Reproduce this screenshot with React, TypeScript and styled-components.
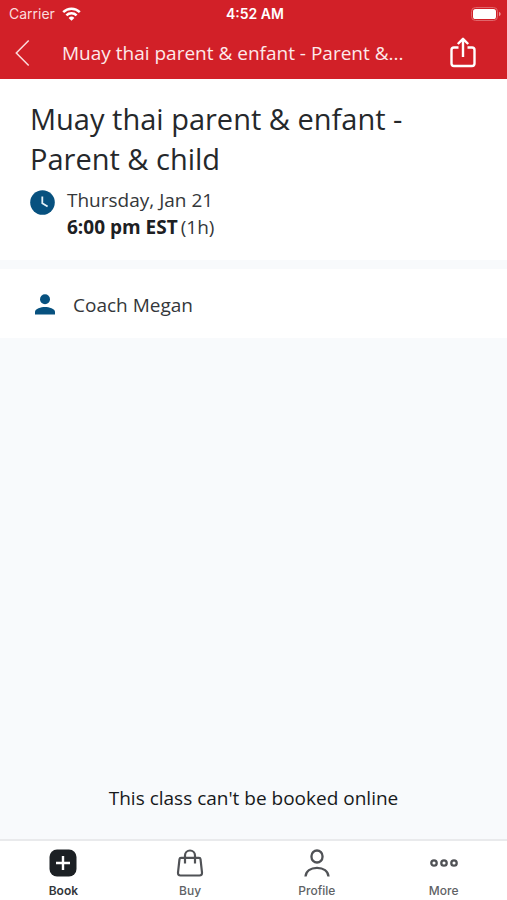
import React from "react";
import styled, { createGlobalStyle } from "styled-components";

const GlobalStyle = createGlobalStyle`
  * { box-sizing: border-box; }
  body { margin: 0; }
  button { border: 0; padding: 0; margin: 0; background: none; font: inherit; color: inherit; cursor: pointer; }
  svg { display: block; flex: none; }
`;

const Screen = styled.div`
  min-height: 100vh;
  display: flex;
  flex-direction: column;
  background: #f8fafc;
  color: #25282b;
  font-family: "Open Sans", "Noto Sans", sans-serif;
`;

const Header = styled.header`
  background: #d22028;
  color: #fff;
`;

const StatusBar = styled.div`
  display: grid;
  grid-template-columns: 1fr auto 1fr;
  align-items: center;
  height: 26px;
  padding: 1px 6px 0 9px;
  font-family: Inter, "Liberation Sans", sans-serif;
  font-size: 14px;
  line-height: 16px;
`;

const Carrier = styled.div`
  display: flex;
  align-items: center;
  gap: 7px;
  color: #fbdcdd;
`;

const Clock = styled.time`
  font-weight: 600;
`;

const BatterySlot = styled.div`
  justify-self: end;
`;

const NavBar = styled.div`
  display: flex;
  align-items: center;
  height: 53px;
  padding: 0 31px 0 14px;
`;

const NavButton = styled.button`
  display: flex;
  align-items: center;
`;

const NavTitle = styled.div`
  flex: 1;
  min-width: 0;
  margin: 0 16px 0 32px;
  overflow: hidden;
  white-space: nowrap;
  text-overflow: ellipsis;
  font-size: 19px;
  line-height: 28px;
  color: #fde9ea;
`;

const Main = styled.main`
  flex: 1;
  display: flex;
  flex-direction: column;
  gap: 9px;
`;

const Summary = styled.section`
  padding: 20px 30px 19px;
  background: #fff;
`;

const Title = styled.h1`
  margin: 0;
  font-size: 29px;
  font-weight: 400;
  line-height: 40px;
`;

const Schedule = styled.div`
  display: flex;
  gap: 12px;
  margin-top: 8px;
  font-size: 19px;
  line-height: 27px;
  color: #34373a;
`;

const ScheduleIcon = styled.div`
  padding-top: 3px;
`;

const Time = styled.div`
  display: flex;
  gap: 3px;
`;

const StartTime = styled.strong`
  font-weight: 700;
  color: #1d2023;
`;

const CoachRow = styled.section`
  display: flex;
  align-items: center;
  gap: 18px;
  height: 69px;
  padding: 2px 30px 0 35px;
  background: #fff;
  font-size: 19px;
  line-height: 28px;
  color: #34373a;
`;

const Notice = styled.p`
  margin: auto 0 27px;
  text-align: center;
  font-size: 19px;
  line-height: 28px;
  color: #17191b;
`;

const TabBar = styled.nav`
  display: grid;
  grid-template-columns: repeat(4, 1fr);
  height: 61px;
  border-top: 2px solid #e9eaec;
  background: #fff;
`;

const Tab = styled.button<{ $active?: boolean }>`
  display: flex;
  flex-direction: column;
  align-items: center;
  gap: 6px;
  padding-top: 8px;
  font-family: Inter, "Liberation Sans", sans-serif;
  font-size: 12px;
  font-weight: ${(p) => (p.$active ? 600 : 500)};
  line-height: 16px;
  color: ${(p) => (p.$active ? "#33363a" : "#606265")};
`;

const WifiIcon = () => (
  <svg width="19" height="14" viewBox="0 0 19 14" fill="none" stroke="#fff" strokeWidth="2.5" aria-hidden="true">
    <path d="M1.2 5.2a11.7 11.7 0 0 1 16.6 0" />
    <path d="M4.4 8.4a7.2 7.2 0 0 1 10.2 0" />
    <path d="M9.5 13.8 6.6 10.9a4.1 4.1 0 0 1 5.800 0Z" fill="#fff" stroke="none" />
  </svg>
);

const BatteryIcon = () => (
  <svg width="30" height="14" viewBox="0 0 30 14" aria-hidden="true">
    <rect x=".5" y=".5" width="26" height="13" rx="4" fill="none" stroke="#e0666b" />
    <rect x="2" y="2" width="23" height="10" rx="2.6" fill="#fff" />
    <path d="M28 4.7q1.7.7 1.7 2.3T28 9.3Z" fill="#ed9599" />
  </svg>
);

const BackIcon = () => (
  <svg width="16" height="28" viewBox="0 0 16 28" fill="none" stroke="#fbdcdd" strokeWidth="1.5" aria-hidden="true">
    <path d="M14.7 1.5 2.3 14l12.4 12.5" />
  </svg>
);

const ShareIcon = () => (
  <svg width="26" height="32" viewBox="0 0 26 32" fill="none" stroke="#fff" strokeWidth="2.4" strokeLinejoin="round" aria-hidden="true">
    <path d="M8.5 10.5H4A2.5 2.5 0 0 0 1.5 13v13.500A2.500 2.500 0 0 0 4 29h18a2.500 2.500 0 0 0 2.500-2.500V13a2.500 2.500 0 0 0-2.500-2.500h-4.500" />
    <path d="M13 20V2.500M7.800 7 13 1.800 18.200 7" />
  </svg>
);

const ClockIcon = () => (
  <svg width="25" height="25" viewBox="0 0 25 25" aria-hidden="true">
    <circle cx="12.5" cy="12.5" r="12.3" fill="#07517f" />
    <path d="M12.3 6.5v6.7l5.3 3.3" fill="none" stroke="#e5f2f8" strokeWidth="1.8" />
  </svg>
);

const CoachIcon = () => (
  <svg width="20" height="21" viewBox="0 0 20 21" fill="#07517f" aria-hidden="true">
    <circle cx="10" cy="5.3" r="5" />
    <path d="M0 20.5V18c0-3.500 6-5 10-5s10 1.500 10 5v2.500Z" />
  </svg>
);

const BookIcon = () => (
  <svg width="28" height="28" viewBox="0 0 28 28" aria-hidden="true">
    <rect x=".5" y=".5" width="27" height="27" rx="7.5" fill="#1c2024" />
    <path d="M14 7v14M7 14h14" stroke="#fff" strokeWidth="2.4" />
  </svg>
);

const BuyIcon = () => (
  <svg width="28" height="28" viewBox="0 0 28 28" fill="none" stroke="#505256" strokeWidth="2.2" strokeLinejoin="round" aria-hidden="true">
    <path d="M5 8.800h18a1.500 1.500 0 0 1 1.500 1.300L26 23.500q.2 3-2.500 3h-19q-2.700 0-2.500-3L3.500 10.100A1.500 1.500 0 0 1 5 8.800Z" />
    <path d="M9 14.500V6.500a5 5 0 0 1 10 0v8" />
  </svg>
);

const ProfileIcon = () => (
  <svg width="28" height="28" viewBox="0 0 28 28" fill="none" stroke="#505256" strokeWidth="2.3" aria-hidden="true">
    <rect x="8.5" y="1.5" width="11" height="12" rx="5.5" />
    <path d="M2.500 27.500c.5-5.500 5-8.700 11.500-8.700s11 3.200 11.500 8.700" />
  </svg>
);

const MoreIcon = () => (
  <svg width="28" height="28" viewBox="0 0 28 28" fill="none" stroke="#505256" strokeWidth="2.3" aria-hidden="true">
    <circle cx="4" cy="14" r="2.7" />
    <circle cx="14" cy="14" r="2.7" />
    <circle cx="24" cy="14" r="2.7" />
  </svg>
);

const tabs = [
  { label: "Book", Icon: BookIcon, active: true },
  { label: "Buy", Icon: BuyIcon },
  { label: "Profile", Icon: ProfileIcon },
  { label: "More", Icon: MoreIcon },
];

export default function App() {
  return (
    <Screen>
      <GlobalStyle />
      <Header>
        <StatusBar>
          <Carrier>
            Carrier
            <WifiIcon />
          </Carrier>
          <Clock>4:52 AM</Clock>
          <BatterySlot>
            <BatteryIcon />
          </BatterySlot>
        </StatusBar>
        <NavBar>
          <NavButton type="button" aria-label="Back">
            <BackIcon />
          </NavButton>
          <NavTitle>Muay thai parent &amp; enfant - Parent &amp;...</NavTitle>
          <NavButton type="button" aria-label="Share">
            <ShareIcon />
          </NavButton>
        </NavBar>
      </Header>
      <Main>
        <Summary>
          <Title>Muay thai parent &amp; enfant - Parent &amp; child</Title>
          <Schedule>
            <ScheduleIcon>
              <ClockIcon />
            </ScheduleIcon>
            <div>
              <div>Thursday, Jan 21</div>
              <Time>
                <StartTime>6:00 pm EST</StartTime>
                <span>(1h)</span>
              </Time>
            </div>
          </Schedule>
        </Summary>
        <CoachRow>
          <CoachIcon />
          <span>Coach Megan</span>
        </CoachRow>
        <Notice>This class can't be booked online</Notice>
      </Main>
      <TabBar>
        {tabs.map(({ label, Icon, active }) => (
          <Tab key={label} type="button" $active={active} aria-current={active ? "page" : undefined}>
            <Icon />
            {label}
          </Tab>
        ))}
      </TabBar>
    </Screen>
  );
}
